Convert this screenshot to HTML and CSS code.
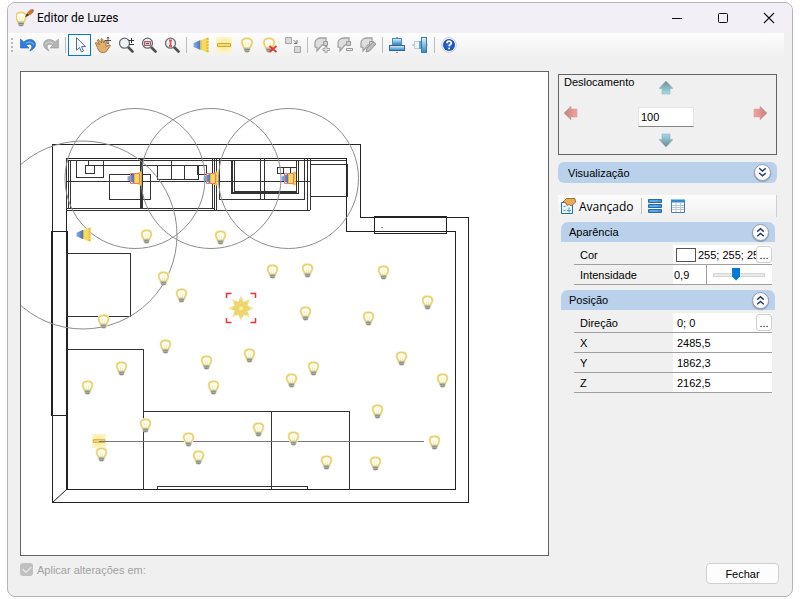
FILE: index.html
```html
<!DOCTYPE html>
<html lang="pt-BR">
<head>
  <meta charset="UTF-8">
  <meta name="viewport" content="width=device-width, initial-scale=1.0">
  <title>Editor de Luzes</title>
  <link rel="stylesheet" href="styles.css">
</head>
<body>
  <svg width="0" height="0" class="defs" aria-hidden="true">
    <defs>
      <linearGradient id="gBlue" x1="0" y1="0" x2="0" y2="1"><stop offset="0" stop-color="#e4f3fb"/><stop offset="1" stop-color="#2f86c4"/></linearGradient>
      <linearGradient id="gTeal" x1="0" y1="0" x2="0" y2="1"><stop offset="0" stop-color="#6e8c94"/><stop offset="1" stop-color="#9fe0ec"/></linearGradient>
      <linearGradient id="gTealDown" x1="0" y1="0" x2="0" y2="1"><stop offset="0" stop-color="#9fdce8"/><stop offset="1" stop-color="#6c8890"/></linearGradient>
      <linearGradient id="gRed" x1="0" y1="0" x2="1" y2="0"><stop offset="0" stop-color="#b88482"/><stop offset="1" stop-color="#fba19d"/></linearGradient>
      <linearGradient id="gRedRight" x1="0" y1="0" x2="1" y2="0"><stop offset="0" stop-color="#fba19d"/><stop offset="1" stop-color="#b88482"/></linearGradient>
      <linearGradient id="gCone" x1="0" y1="0" x2="1" y2="0"><stop offset="0" stop-color="#86b2e8"/><stop offset="1" stop-color="#4a74b8"/></linearGradient>
      <radialGradient id="gGlow"><stop offset="0" stop-color="#fdf9a8"/><stop offset="0.5" stop-color="#ead062"/><stop offset="1" stop-color="#f2dc80" stop-opacity="0.3"/></radialGradient>
      <radialGradient id="gSoft"><stop offset="0" stop-color="#f8e88c"/><stop offset="1" stop-color="#fdf3c4"/></radialGradient>
      <radialGradient id="gHelp"><stop offset="0" stop-color="#3f7ce0"/><stop offset="1" stop-color="#1746b0"/></radialGradient>
      <symbol id="bulb" viewBox="0 0 16 16">
        <path d="M8 1.500C4.500 1.500 3 3 3 5.500c0 2.500 1.700 3.500 2.200 6h5.600c.5-2.500 2.200-3.500 2.200-6C13 3 11.500 1.500 8 1.500z" fill="none" stroke="#f8edc6" stroke-width="3"/>
        <path d="M8 1.500C4.500 1.500 3 3 3 5.500c0 2.500 1.700 3.500 2.200 6h5.600c.5-2.500 2.200-3.500 2.200-6C13 3 11.500 1.500 8 1.500z" fill="#fffff0" stroke="#e8cf70" stroke-width="1.600"/>
        <path d="M6.500 5.500l.7 5h1.600l.7-5" fill="none" stroke="#f5f1b4"/>
        <path d="M5 10.500h6v3.300L9.500 15.500h-3L5 13.800z" fill="#b9b9a8"/>
        <path d="M5.500 12.500h5M6 14.300h4" stroke="#858680"/>
      </symbol>
      <symbol id="spot" viewBox="0 0 16 16">
        <path d="M.5 6L3 5l4.500-2v10L3 11 .5 10z" fill="url(#gCone)"/>
        <path d="M7.500 3.500L11 2l4.500-2v16L11 14l-3.500-1.500z" fill="#f5da5e"/>
        <path d="M14.500 1v14" stroke="#e6b93c" stroke-width="2" stroke-dasharray="2 1"/>
        <path d="M8 3.500v9" stroke="#e0b444"/>
      </symbol>
      <symbol id="tube" viewBox="0 0 16 16">
        <path d="M0 0h16v16H0z" fill="url(#gSoft)"/>
        <path d="M1.500 6.500h13v3h-13z" fill="#f3dc70" stroke="#cda93a"/>
      </symbol>
      <symbol id="lens" viewBox="0 0 16 16">
        <path d="M10 10l4.500 4.500" stroke="#4d5156" stroke-width="2.600" stroke-linecap="round"/>
        <circle cx="6.500" cy="6.200" r="5" fill="#eef3f6" stroke="#6a6d70" stroke-width="1.300"/>
      </symbol>
      <symbol id="tag" viewBox="0 0 16 16">
        <path d="M1 10V6c0-3.500 3-5 6.500-5H12v6L8 8 5 11.500 3 14v-3.500z" fill="#dedede" stroke="#a2a2a2" stroke-width="1.300"/>
        <path d="M9.500 4.500h4v4h-4z" fill="#d0d0d0" stroke="#999"/>
      </symbol>
      <symbol id="down" viewBox="0 0 16 16"><path d="M4.500 3.500L8 6.500l3.500-3M4.500 8.500L8 11.500l3.500-3" fill="none" stroke="#27396e" stroke-width="1.600"/></symbol>
      <symbol id="up" viewBox="0 0 16 16"><path d="M4.500 7L8 4l3.500 3M4.500 12L8 9l3.500 3" fill="none" stroke="#27396e" stroke-width="1.600"/></symbol>
    </defs>
  </svg>

  <div class="window">
    <header class="titlebar">
      <svg class="app-icon" viewBox="0 0 18 18"><use href="#bulb" x="-3" y="2" width="16" height="16"/><path d="M9 8.500l2-4.500 2.500 2z" fill="#4a3524"/><path d="M11.300 3.500L14.500.5l3 2.500-3.500 3.500z" fill="#d4721f"/><path d="M14.500.5h3V3z" fill="#8a3f12"/></svg>
      <h1>Editor de Luzes</h1>
      <div class="window-buttons">
        <button type="button" aria-label="Minimizar"><svg viewBox="0 0 12 12"><path d="M1 6.500h10" stroke="#111"/></svg></button>
        <button type="button" aria-label="Maximizar"><svg viewBox="0 0 12 12"><rect x="1.500" y="1.500" width="9" height="9" rx="1" fill="none" stroke="#111"/></svg></button>
        <button type="button" aria-label="Fechar janela"><svg viewBox="0 0 12 12"><path d="M1 1l10 10M11 1L1 11" stroke="#111" stroke-width="1.100"/></svg></button>
      </div>
    </header>

    <nav class="toolbar">
      <span class="grip"></span>
      <button type="button" aria-label="Desfazer"><svg viewBox="0 0 16 16"><path d="M.5 2v9h8.500L6.500 8.500c2-2 5.300-1.500 5.300 1.100 0 1.400-.8 2.800-2 4.400 3.300-1.500 5.700-3.700 5.700-6.500 0-5-7-7-11.700-2.500z" fill="#2e7fdf" stroke="#1c59b8" stroke-width=".6"/><path d="M6 6.300c3-2 7-1.200 7.500 1.500" fill="none" stroke="#8ec2f7"/></svg></button>
      <button type="button" aria-label="Refazer"><svg viewBox="0 0 16 16"><path d="M15.500 2v9H7l2.500-2.500c-2-2-5.300-1.500-5.300 1.100 0 1.400.8 2.800 2 4.400C2.900 12.500.5 10.300.5 7.500c0-5 7-7 11.700-2.500z" fill="#b4b4b4" stroke="#999" stroke-width=".6"/><path d="M10 6.300c-3-2-7-1.200-7.500 1.500" fill="none" stroke="#ddd"/></svg></button>
      <span class="sep"></span>
      <button type="button" class="active" aria-label="Selecionar"><svg viewBox="0 0 16 16"><path d="M4.500.8v12.400l3-2.800 2 4.600 2-1-2-4.400h4z" fill="#fff" stroke="#51698f"/><path d="M6 4.500v6l2-2z" fill="#dfe7f2"/></svg></button>
      <button type="button" aria-label="Mover"><svg viewBox="0 0 16 16"><path d="M.5 6.500C0 5.500 1 5 2 6l2.500 1.500L2.500 4c-.5-1.200.8-1.800 1.500-.8L6.500 6 6 2.500C6 1.300 7.500 1.300 7.700 2.500L8.800 6l1-2c.4-1 1.700-.7 1.500.4L11 9.500l3-1.500c1.500-.5 1.800.6.8 1.500l-3.300 4.500c-1 1.500-2.500 2-4.500 1.500-3-.5-4-3-4.500-5z" fill="#e2b068" stroke="#8c6232" stroke-width=".8"/><path d="M13 0v7M9.500 3.500h7M12 1.200l1-1 1 1M12 5.800l1 1 1-1" fill="none" stroke="#444" stroke-width=".9"/></svg></button>
      <button type="button" aria-label="Zoom"><svg viewBox="0 0 16 16"><use href="#lens" width="16" height="16"/><path d="M11 3.500h5M13.500 1v5M11 7.500h5" stroke="#333"/></svg></button>
      <button type="button" aria-label="Zoom janela"><svg viewBox="0 0 16 16"><use href="#lens" width="16" height="16"/><path d="M3.500 4.500h6v4h-6z" fill="#d9c7cb" stroke="#b8505f"/><path d="M5 6.500h3" stroke="#555"/></svg></button>
      <button type="button" aria-label="Zoom total"><svg viewBox="0 0 16 16"><use href="#lens" width="16" height="16"/><path d="M6.500 2.500v7.500M5 3.500h3M5 9h3" fill="none" stroke="#f0505e" stroke-width="1.800"/></svg></button>
      <span class="sep"></span>
      <button type="button" aria-label="Luz spot"><svg viewBox="0 0 16 16"><use href="#spot" width="16" height="16"/></svg></button>
      <button type="button" aria-label="Luz linear"><svg viewBox="0 0 16 16"><use href="#tube" width="16" height="16"/></svg></button>
      <button type="button" aria-label="Luz pontual"><svg viewBox="0 0 16 16"><use href="#bulb" width="16" height="16"/></svg></button>
      <button type="button" aria-label="Remover luz"><svg viewBox="0 0 16 16"><use href="#bulb" x="-1" width="16" height="16"/><path d="M7.500 9l7 6M14.500 9l-7 6" stroke="#e93434" stroke-width="1.800"/></svg></button>
      <button type="button" aria-label="Substituir"><svg viewBox="0 0 16 16"><path d="M.5.5h6v6h-6zM9.500 9.500h6v6h-6z" fill="#d9d9d9" stroke="#a6a6a6"/><path d="M8.500 3l3 3M12 3v3.500H9" fill="none" stroke="#777"/></svg></button>
      <span class="sep"></span>
      <button type="button" aria-label="Adicionar grupo"><svg viewBox="0 0 16 16"><use href="#tag" width="16" height="16"/><path d="M11 9.500h2v2h2.500v2H13V16h-2v-2.500H9v-2h2z" fill="#e8e8e8" stroke="#8f8f8f" stroke-width=".8"/></svg></button>
      <button type="button" aria-label="Remover grupo"><svg viewBox="0 0 16 16"><use href="#tag" width="16" height="16"/><path d="M9.500 11.500h6v2h-6z" fill="#eee" stroke="#8f8f8f" stroke-width=".9"/></svg></button>
      <button type="button" aria-label="Editar grupo"><svg viewBox="0 0 16 16"><use href="#tag" width="16" height="16"/><path d="M6 15l1-4 6.500-6 2.500 2-6.500 7z" fill="#bdbdbd" stroke="#929292"/></svg></button>
      <span class="sep"></span>
      <button type="button" aria-label="Alinhar horizontal"><svg viewBox="0 0 16 16"><path d="M8 0v16" stroke="#333" stroke-dasharray="2 1"/><rect x="3.500" y="1.500" width="9" height="6" fill="url(#gBlue)" stroke="#4b8ab9"/><rect x=".5" y="8.500" width="15" height="5" fill="url(#gBlue)" stroke="#28669b"/></svg></button>
      <button type="button" aria-label="Alinhar vertical"><svg viewBox="0 0 16 16"><path d="M0 8h16" stroke="#aaa" stroke-dasharray="2 1"/><rect x="2.500" y="4.500" width="6" height="7" fill="#edf6fb" stroke="#bccbd6"/><path d="M8 4v8" stroke="#6ba6ce" stroke-width="2"/><rect x="9.500" y=".5" width="5" height="15" fill="url(#gBlue)" stroke="#347bb0"/></svg></button>
      <span class="sep"></span>
      <button type="button" aria-label="Ajuda"><svg viewBox="0 0 16 16"><circle cx="8" cy="8" r="7.300" fill="#fff" stroke="#c4cbdc"/><circle cx="8" cy="8" r="6" fill="url(#gHelp)"/><path d="M5.900 6.300c0-3 4.400-2.700 4.400-.3 0 1.600-2.200 1.500-2.200 3.300" fill="none" stroke="#fff" stroke-width="1.700"/><circle cx="8.100" cy="11.600" r="1" fill="#fff"/></svg></button>
    </nav>

    <main class="content">
      <div class="plan">
        <svg viewBox="21 72 527 483" role="img" aria-label="Planta com as luzes">
          <!-- paredes -->
          <g fill="none" stroke="#222" shape-rendering="crispEdges">
            <path d="M52.500 144.500H360.500V217.500H468.500V502.500H52.500z"/>
            <path d="M66.500 158.500H346.500V231.500H455.500V489.500H66.500z"/>
            <path d="M374.500 216.500h72v17h-72z"/>
            <path d="M51.500 231.500h15v184h-15z"/>
            <path d="M67 231v258" stroke-width="2"/>
            <path d="M52 231v184" stroke-width="2"/>
          </g>
          <path d="M52.500 502.500l14-13" stroke="#222"/>
          <path d="M381 227.500h2" stroke="#999"/>
          <!-- moveis -->
          <g fill="none" stroke="#333" shape-rendering="crispEdges">
            <path d="M66.500 253.500h64v63h-64zM66.500 349.500h77v140M143.500 411.500h206v78M271.500 411v78M157.500 489v-3h150v3"/>
            <path d="M66 160.500h280M66 181.500h244M66 208.500h148M66 210.500h244M66.500 158v52M68.500 160v49M70.500 160v49"/>
            <path d="M76.500 160.500h27v17h-27zM85.500 165.500h9v8h-9zM88.500 160v5h118M109.500 174.500h41v25h-41z"/>
            <path d="M141.500 158v51" stroke-width="3"/>
            <path d="M157.500 165v14h41v-14M171.500 160v19M184.500 165v14M197.500 165.500h9v9h-9z"/>
            <path d="M212.500 158v51M214.500 158v52M216.500 158v52M219.500 158v41h85v-41M307.500 158v52M310.500 158v52"/>
            <path d="M231.500 160v33h67v-33M234.500 160v31h62v-31M260.500 158v41M264.500 158v41"/>
            <path d="M232.500 160v32h64v-32"/>
            <path d="M277.500 167.500h19v6h-19zM283.500 167v6M290.500 167v6"/>
            <path d="M310.500 164.500h37v32h-37z"/>
          </g>
          <!-- alcance dos spots -->
          <g fill="none" stroke="#8c8c8c">
            <circle cx="135" cy="178.500" r="70"/>
            <circle cx="211" cy="178.500" r="70"/>
            <circle cx="288.500" cy="178.500" r="70"/>
            <circle cx="83" cy="235" r="94"/>
          </g>
          <use href="#tube" x="92" y="434" width="14" height="14"/>
          <path d="M99 441.500h325" stroke="#777"/>
          <use href="#spot" x="76" y="227" width="15" height="15"/>
          <use href="#spot" x="127" y="171" width="15" height="15"/>
          <use href="#spot" x="203" y="171" width="15" height="15"/>
          <use href="#spot" x="281" y="171" width="15" height="15"/>
          <g fill="none" stroke="#f6766c">
            <path d="M130.500 173.500h9v10h-9zM206.500 173.500h9v10h-9zM284.500 173.500h9v10h-9z"/>
          </g>
          <g id="bulbs"></g>
          <path d="M241 294.500l2.600 7.600 7.200-3.600-3.600 7.200 7.600 2.600-7.600 2.600 3.600 7.200-7.200-3.600-2.600 7.600-2.600-7.600-7.200 3.600 3.600-7.200-7.600-2.600 7.600-2.600-3.600-7.200 7.200 3.600z" fill="url(#gGlow)"/>
          <circle cx="241" cy="308.300" r="7" fill="url(#gGlow)"/>
          <path d="M226.500 298v-4.500h5M250.500 293.500h5v4.500M226.500 318v4.500h5M250.500 322.500h5v-4.500" fill="none" stroke="#fb3030" stroke-width="1.500"/>
        </svg>
      </div>

      <aside class="panel">
        <section class="move">
          <label for="step">Deslocamento</label>
          <button type="button" class="north" aria-label="Para cima"><svg viewBox="0 0 14 14"><path d="M7 0l7 7.500h-3V13H3V7.500H0z" fill="url(#gTeal)" stroke="#87aab2" stroke-width=".5"/></svg></button>
          <button type="button" class="west" aria-label="Para a esquerda"><svg viewBox="0 0 14 14"><path d="M0 7l7-7v3h6v8H7v3z" fill="url(#gRed)" stroke="#d39a98" stroke-width=".5"/></svg></button>
          <input type="text" id="step" value="100">
          <button type="button" class="east" aria-label="Para a direita"><svg viewBox="0 0 14 14"><path d="M14 7L7 0v3H1v8h6v3z" fill="url(#gRedRight)" stroke="#d39a98" stroke-width=".5"/></svg></button>
          <button type="button" class="south" aria-label="Para baixo"><svg viewBox="0 0 14 14"><path d="M7 14L0 6.500h3V1h8v5.500h3z" fill="url(#gTealDown)" stroke="#87aab2" stroke-width=".5"/></svg></button>
        </section>

        <button type="button" class="bar bar-main">Visualização <span class="chev"><svg viewBox="0 0 16 16"><use href="#down"/></svg></span></button>

        <div class="panel-tools">
          <button type="button"><svg viewBox="0 0 16 16"><path d="M1.500 4.500h11v11h-11z" fill="#eaf5ff" stroke="#2473b9"/><path d="M3.500 8.500h2M3.500 12.500h2M7 12.500h4M9 9.500v5" stroke="#4c99da"/><path d="M3 4L6.500.5H15L15.500 4l-4 4L9 6.500 7 7.500 6 5z" fill="#e9ad56" stroke="#8d5b1e" stroke-width=".8"/></svg>Avançado</button>
          <span class="sep"></span>
          <button type="button" class="mini" aria-label="Categorias"><svg viewBox="0 0 16 16"><path d="M1.500 1.500h13v3h-13zM1.500 6.500h13v3h-13zM1.500 11.500h13v3h-13z" fill="#3797e0" stroke="#316a9b"/><path d="M3 3h8M3 8h8M3 13h8" stroke="#79c0f0"/></svg></button>
          <button type="button" class="mini" aria-label="Tabela"><svg viewBox="0 0 16 16"><path d="M1.500 2.500h13v12h-13z" fill="#fff" stroke="#517da4"/><path d="M1 1.500h14v3H1z" fill="#2f8ad5"/><path d="M6 5v9M10.500 5v9M2 7.500h12M2 9.500h12M2 11.500h12" stroke="#b5cadb"/></svg></button>
        </div>

        <section class="group">
          <button type="button" class="bar">Aparência <span class="chev"><svg viewBox="0 0 16 16"><use href="#up"/></svg></span></button>
          <div class="rows">
            <div class="row">
              <label for="color">Cor</label>
              <div class="value"><span class="swatch"></span><input type="text" id="color" value="255; 255; 255"><button type="button" class="more">...</button></div>
            </div>
            <div class="row">
              <label for="intensity">Intensidade</label>
              <div class="value"><input type="text" id="intensity" class="short" value="0,9"><input type="range" min="0" max="100" value="43" aria-label="Intensidade"></div>
            </div>
          </div>
        </section>

        <section class="group">
          <button type="button" class="bar">Posição <span class="chev"><svg viewBox="0 0 16 16"><use href="#up"/></svg></span></button>
          <div class="rows">
            <div class="row">
              <label for="dir">Direção</label>
              <div class="value"><input type="text" id="dir" value="0; 0"><button type="button" class="more">...</button></div>
            </div>
            <div class="row"><label for="posx">X</label><div class="value"><input type="text" id="posx" value="2485,5"></div></div>
            <div class="row"><label for="posy">Y</label><div class="value"><input type="text" id="posy" value="1862,3"></div></div>
            <div class="row"><label for="posz">Z</label><div class="value"><input type="text" id="posz" value="2162,5"></div></div>
          </div>
        </section>
      </aside>
    </main>

    <footer class="footer">
      <label><input type="checkbox" checked disabled>Aplicar alterações em:</label>
      <button type="button" class="close">Fechar</button>
    </footer>
  </div>

  <script>
    // Centro de cada lâmpada na planta
    const bulbs = [
      [146, 237], [220, 238], [163, 279], [181, 296], [272, 272], [307, 271], [383, 273],
      [427, 303], [305, 314], [368, 319], [103, 322], [165, 347], [249, 356], [206, 363],
      [121, 369], [313, 369], [401, 359], [291, 381], [442, 381], [87, 388], [213, 388],
      [377, 412], [145, 426], [258, 430], [188, 440], [293, 439], [434, 443], [101, 455],
      [198, 458], [326, 463], [375, 464]
    ];
    const layer = document.getElementById("bulbs");
    bulbs.forEach(([x, y]) => {
      const use = document.createElementNS("http://www.w3.org/2000/svg", "use");
      use.setAttribute("href", "#bulb");
      use.setAttribute("x", x - 7);
      use.setAttribute("y", y - 8);
      use.setAttribute("width", 15);
      use.setAttribute("height", 15);
      layer.appendChild(use);
    });
  </script>
</body>
</html>
```
FILE: styles.css
```css
* {
  box-sizing: border-box;
}
body {
  margin: 0;
  background: #fff;
  color: #000;
  font-family: "Liberation Sans", Arial, sans-serif;
  font-size: 12px;
}
button, input {
  font: inherit;
  color: inherit;
  margin: 0;
  padding: 0;
  border: 0;
  background: none;
}
svg {
  display: block;
}
.defs {
  position: absolute;
}
.window {
  display: flex;
  flex-direction: column;
  margin: 2px 7px;
  min-height: calc(100vh - 4px);
  border: 1px solid #b4b4b4;
  border-radius: 8px;
  background: #f0f0f0;
  overflow: hidden;
}

/* barra de título */
.titlebar {
  display: flex;
  align-items: center;
  height: 30px;
  padding-left: 8px;
  background: #f2eff7;
}
.app-icon {
  width: 18px;
  height: 18px;
}
h1 {
  margin: 0 0 0 3px;
  font-family: Roboto, sans-serif;
  font-size: 12px;
  font-weight: normal;
}
.window-buttons {
  display: flex;
  margin-left: auto;
}
.window-buttons button {
  display: grid;
  place-items: center;
  width: 46px;
  height: 30px;
}
.window-buttons svg {
  width: 12px;
  height: 12px;
}

/* ferramentas */
.toolbar {
  display: flex;
  align-items: center;
  height: 24px;
  margin-right: 8px;
  background: linear-gradient(#fdfdfd, #f0f0f0);
}
.toolbar button {
  display: grid;
  place-items: center;
  width: 23px;
  height: 22px;
}
.toolbar button svg {
  width: 16px;
  height: 16px;
}
.toolbar .active {
  border: 1px solid #0078d7;
  background: #fbfcfe;
}
.grip {
  width: 2px;
  height: 14px;
  margin: 0 3px;
  background: repeating-linear-gradient(#b8b8b8 0 2px, transparent 2px 4px);
}
.sep {
  width: 1px;
  height: 16px;
  margin: 0 2px 0 3px;
  background: #bdbdbd;
}

/* área principal */
.content {
  display: flex;
  align-items: flex-start;
  gap: 9px;
  padding: 14px 15px 0 12px;
}
.plan {
  flex: 1;
  min-width: 0;
  border: 1px solid #646464;
  background: #fff;
}
.plan svg {
  width: 100%;
  height: auto;
}
.panel {
  width: 219px;
  padding-top: 3px;
  font-size: 11px;
}
.move {
  display: grid;
  grid-template-columns: 79px 56px 1fr;
  grid-template-rows: 25px 29px 25px;
  align-items: center;
  border: 1px solid #646464;
}
.move label {
  grid-area: 1 / 1;
  align-self: start;
  padding: 1px 0 0 5px;
}
.move svg {
  width: 14px;
  height: 14px;
}
.north {
  grid-area: 1 / 2;
  justify-self: center;
}
.west {
  grid-area: 2 / 1;
  align-self: start;
  justify-self: start;
  margin: 6px 0 0 5px;
}
.east {
  grid-area: 2 / 3;
  align-self: start;
  justify-self: end;
  margin: 6px 9px 0 0;
}
.south {
  grid-area: 3 / 2;
  align-self: start;
  justify-self: center;
  margin-top: 4px;
}
#step {
  grid-area: 2 / 2;
  width: 56px;
  height: 20px;
  margin-top: 4px;
  padding-left: 2px;
  border: 1px solid #e4e4e4;
  border-bottom-color: #868686;
  background: #fff;
}
.bar {
  display: flex;
  align-items: center;
  justify-content: space-between;
  width: 100%;
  height: 20px;
  padding: 0 6px 0 8px;
  border-radius: 7px 7px 0 0;
  background: #b9d1ea;
}
.bar-main {
  height: 21px;
  margin-top: 7px;
  padding-left: 10px;
  border-radius: 6px;
}
.chev {
  display: grid;
  place-items: center;
  width: 17px;
  height: 17px;
  border: 1px solid #8f9cad;
  border-radius: 50%;
  background: #fff;
  box-shadow: 0 1px 1px #8c9db2;
}
.chev svg {
  width: 15px;
  height: 15px;
}
.panel-tools {
  display: flex;
  align-items: center;
  height: 22px;
  margin-top: 12px;
  padding-left: 2px;
  border-right: 1px solid #d0d0d0;
  background: linear-gradient(#fdfdfd, #f0f0f0);
}
.panel-tools button {
  display: flex;
  align-items: center;
  gap: 3px;
  font-family: "Open Sans", sans-serif;
  font-size: 12px;
}
.panel-tools svg {
  width: 16px;
  height: 16px;
}
.panel-tools .sep {
  margin: 0 5px 0 7px;
}
.panel-tools .mini {
  margin-right: 7px;
}
.group {
  margin: 5px 2px 0 3px;
}
.rows {
  margin: 3px 3px 0 13px;
}
.row {
  display: flex;
  align-items: stretch;
  height: 20px;
  border-bottom: 1px solid #a0a0a0;
}
.row > label {
  width: 99px;
  padding: 4px 0 0 6px;
}
.value {
  display: flex;
  flex: 1;
  align-items: center;
  min-width: 0;
  background: #fff;
}
.value input[type="text"] {
  flex: 1;
  min-width: 0;
  padding-left: 4px;
}
.swatch {
  width: 20px;
  height: 14px;
  margin-left: 3px;
  border: 1px solid #555;
}
.swatch + input[type="text"] {
  padding-left: 2px;
}
.more {
  width: 16px;
  height: 17px;
  border: 1px solid #d0d0d0;
  border-radius: 3px;
  background: #fdfdfd;
}
.value input.short[type="text"] {
  flex: 0 0 34px;
  width: 34px;
  height: 19px;
  padding-left: 1px;
  border-right: 1px solid #a0a0a0;
}
input[type="range"] {
  appearance: none;
  flex: 1;
  min-width: 0;
  margin: 0 7px 0 6px;
  height: 14px;
}
input[type="range"]::-webkit-slider-runnable-track {
  height: 4px;
  border: 1px solid #d6d6d6;
  background: #e7eaea;
}
input[type="range"]::-webkit-slider-thumb {
  appearance: none;
  width: 8px;
  height: 13px;
  margin-top: -6px;
  background: #0078d7;
  clip-path: polygon(0 0, 100% 0, 100% 70%, 50% 100%, 0 70%);
}

/* rodapé */
.footer {
  display: flex;
  align-items: flex-start;
  justify-content: space-between;
  padding: 7px 13px 12px 12px;
}
.footer label {
  display: flex;
  align-items: center;
  gap: 4px;
  font-size: 11px;
  color: #a0a0a0;
}
.footer input {
  appearance: none;
  display: grid;
  place-items: center;
  width: 13px;
  height: 13px;
  border-radius: 3px;
  background: #c0c0c0;
}
.footer input::before {
  content: "";
  width: 7px;
  height: 4px;
  margin-bottom: 2px;
  border: solid #f4f4f4;
  border-width: 0 0 1px 1px;
  transform: rotate(-45deg);
}
.close {
  width: 73px;
  height: 21px;
  border: 1px solid #d0d0d0;
  border-radius: 4px;
  background: #fdfdfd;
  font-size: 11px;
}
```
